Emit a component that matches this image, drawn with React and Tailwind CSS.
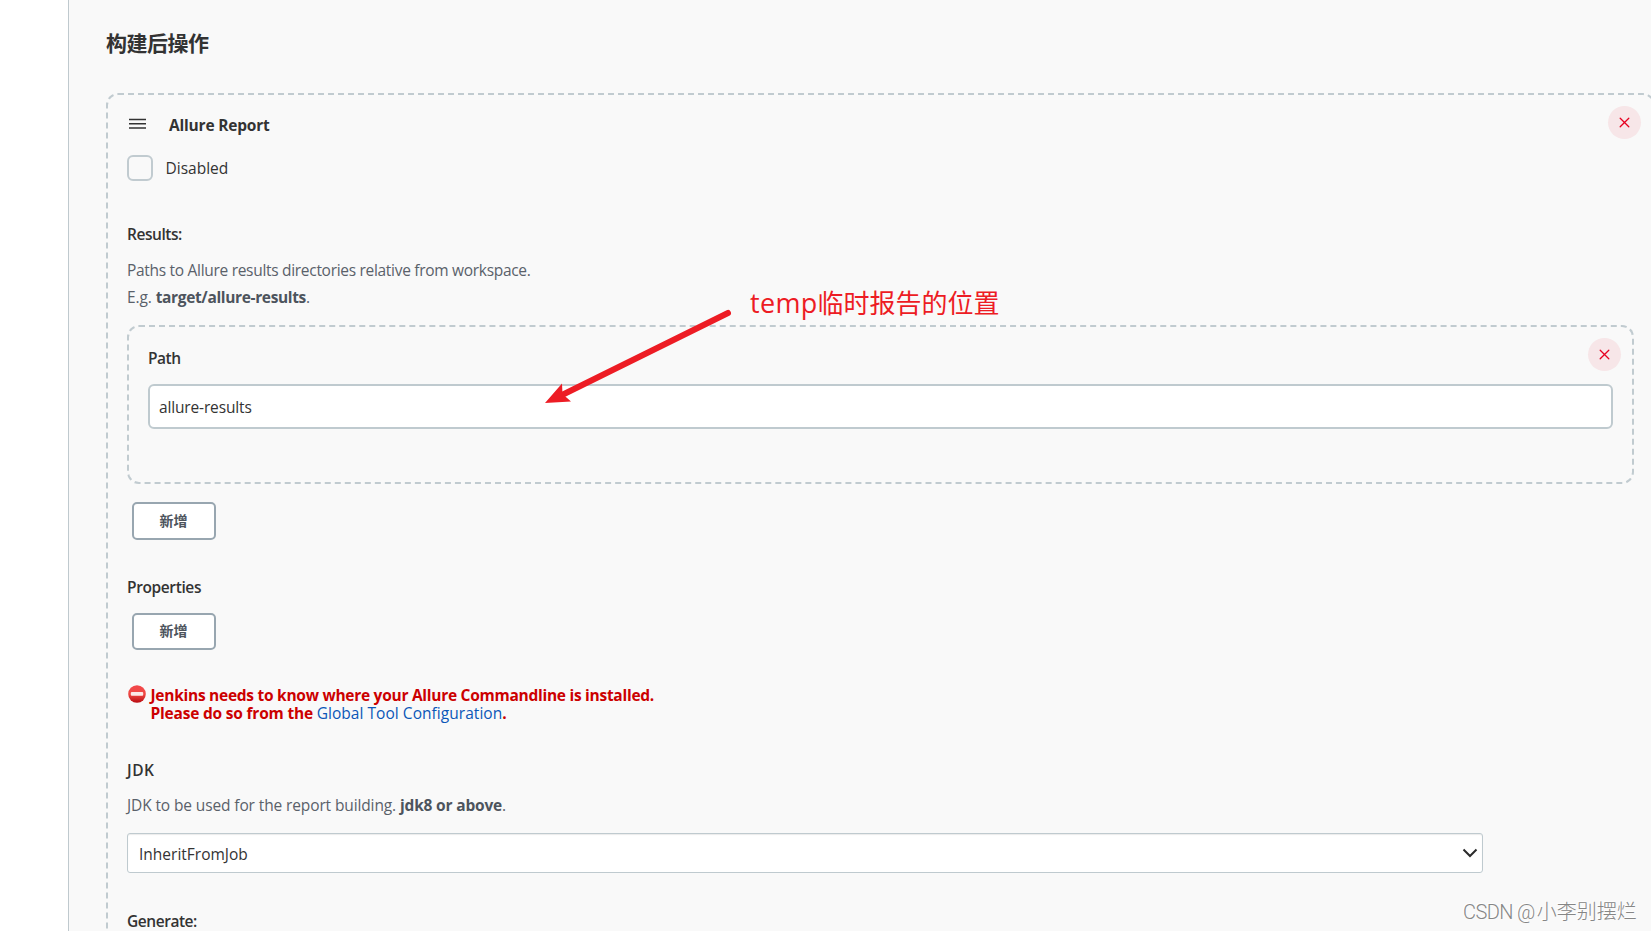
import React, { useState } from 'react';

function DeleteButton({ onClick }) {
  return (
    <button onClick={onClick} className="flex h-[33px] w-[33px] shrink-0 items-center justify-center rounded-full bg-[#f7e6e8]">
      <svg width="11" height="11" viewBox="0 0 11 11" fill="none" stroke="#e6001f" strokeWidth="1.3" strokeLinecap="round">
        <path d="M1.2 1.2L9.8 9.8M9.8 1.2L1.2 9.8" />
      </svg>
    </button>
  );
}

function AddButton({ className }) {
  return (
    <button className={`ml-[5px] block w-[84px] rounded-[5px] border-2 border-[#98a6b0] bg-white pr-px text-[14px] leading-none font-bold text-[#4d545d] ${className}`}>新增</button>
  );
}

function ErrorIcon() {
  return (
    <svg className="mt-[2px] ml-[0.5px] shrink-0" width="18" height="18" viewBox="0 0 18 18">
      <defs>
        <linearGradient id="errorFill" x1="0" y1="0" x2="0" y2="1">
          <stop offset="0" stopColor="#f2474a" />
          <stop offset="0.5" stopColor="#f04a45" />
          <stop offset="1" stopColor="#b80a10" />
        </linearGradient>
      </defs>
      <circle cx="9" cy="9" r="8.8" fill="url(#errorFill)" />
      <rect x="2.8" y="7" width="12.4" height="3.8" rx="1" fill="#fbe9e8" />
    </svg>
  );
}

function App() {
  const [disabled, setDisabled] = useState(false);
  const [path, setPath] = useState('allure-results');

  return (
    <div className="relative flex h-[931px] w-[1651px] overflow-hidden bg-white font-['Open_Sans','Noto_Sans_CJK_SC',sans-serif] text-[15.5px] leading-6 text-[#333333]">
      <div className="w-[68px] shrink-0" />
      <main className="min-w-0 flex-1 border-l border-[#bfc9ce] bg-[#f9f9f9] pl-[37px]">
        <h2 className="mt-[27px] h-8 text-[21px] leading-8 font-bold tracking-[-0.5px]">构建后操作</h2>

        <section className="mt-[34px] h-[900px] w-[1549px] rounded-[12px] border-2 border-dashed border-[#c1cbd0] px-[19px] pt-[11px]">
          <div className="-mr-[7px] flex h-[33px] items-center justify-between">
            <div className="flex items-center">
              <svg className="mt-px ml-0.5" width="17" height="11" viewBox="0 0 17 11" stroke="#333" strokeWidth="1.5">
                <path d="M0 1.5h17M0 5.8h17M0 10h17" />
              </svg>
              <b className="mt-[5px] ml-[23px] tracking-[-0.2px]">Allure Report</b>
            </div>
            <DeleteButton />
          </div>

          <label className="mt-4 flex h-[26px] items-center">
            <input type="checkbox" checked={disabled} onChange={(e) => setDisabled(e.target.checked)} className="h-[26px] w-[26px] appearance-none rounded-[6px] border-2 border-[#c1cbd0] bg-[#f9f9f9]" />
            <span className="ml-[12.5px] font-medium">Disabled</span>
          </label>

          <div className="mt-[41px] font-semibold tracking-[-0.45px]">Results:</div>
          <div className="mt-[11px] leading-[27px] text-[#5a616a]">
            <p className="tracking-[-0.3px]">Paths to Allure results directories relative from workspace.</p>
            <p className="tracking-[-0.1px]">E.g. <b className="tracking-[-0.35px] text-[#4d545d]">target/allure-results</b>.</p>
          </div>

          <div className="mt-[14px] h-[159px] w-[1507px] rounded-[12px] border-2 border-dashed border-[#c1cbd0] px-[19px] pt-[11px]">
            <div className="-mr-[8px] flex h-[33px] items-center justify-between">
              <span className="mt-1.5 font-semibold tracking-[-0.5px]">Path</span>
              <DeleteButton />
            </div>
            <input value={path} onChange={(e) => setPath(e.target.value)} className="mt-[13px] block h-[45px] w-[1465px] rounded-[6px] border-2 border-[#bfcacf] bg-white px-[9px] tracking-[-0.15px]" />
          </div>

          <AddButton className="mt-[18px] h-[38px]" />
          <div className="mt-[35px] font-semibold tracking-[-0.38px]">Properties</div>
          <AddButton className="mt-[14px] h-[37px] pb-0.5" />

          <div className="mt-[33px] flex leading-[18px] font-bold text-[#cc0000]">
            <ErrorIcon />
            <div className="mt-[3px] ml-[5px]">
              <p className="tracking-[-0.27px]">Jenkins needs to know where your Allure Commandline is installed.</p>
              <p className="tracking-[-0.2px]">Please do so from the <a className="font-medium tracking-[0.04px] text-[#0b57b8]">Global Tool Configuration</a>.</p>
            </div>
          </div>

          <div className="mt-[36px] font-semibold tracking-[0.5px]">JDK</div>
          <p className="mt-[11px] tracking-[-0.12px] text-[#5a616a]">JDK to be used for the report building. <b className="tracking-[-0.18px] text-[#4d545d]">jdk8 or above</b>.</p>
          <div className="mt-4 flex h-10 w-[1356px] items-center justify-between rounded-[3px] border border-[#bfcacf] bg-white pr-1 pl-[11px] shadow-[inset_0_1px_1px_rgba(0,0,0,0.08)]">
            <span className="mt-0.5">InheritFromJob</span>
            <svg width="16" height="10" viewBox="0 0 16 10" fill="none" stroke="#2b2b2b" strokeWidth="2">
              <path d="M1.5 1.5L8 8L14.5 1.5" />
            </svg>
          </div>
          <div className="mt-[36px] font-semibold tracking-[-0.45px]">Generate:</div>
        </section>
      </main>

      {/* annotation over the form */}
      <svg className="pointer-events-none absolute top-[300px] left-[540px]" width="200" height="110" viewBox="540 300 200 110">
        <path d="M728 313L562 395" stroke="#ed1c24" strokeWidth="6" strokeLinecap="round" />
        <path d="M545 403L562 383.5L562.5 394L571 401.5Z" fill="#ed1c24" />
      </svg>
      <div className="absolute top-[285px] left-[750px] text-[26px] leading-9 whitespace-nowrap text-[#ed1c24]"><span className="text-[27px] tracking-[0.3px]">temp</span>临时报告的位置</div>
      <div className="absolute top-[898px] left-[1463px] font-['Roboto','Noto_Sans_CJK_SC',sans-serif] text-[20px] leading-7 font-light whitespace-nowrap text-[#868686] [text-shadow:-1px_-1px_0_#fff]"><span className="mr-0.5 tracking-[-0.6px]">CSDN @</span>小李别摆烂</div>
    </div>
  );
}

export default App;
